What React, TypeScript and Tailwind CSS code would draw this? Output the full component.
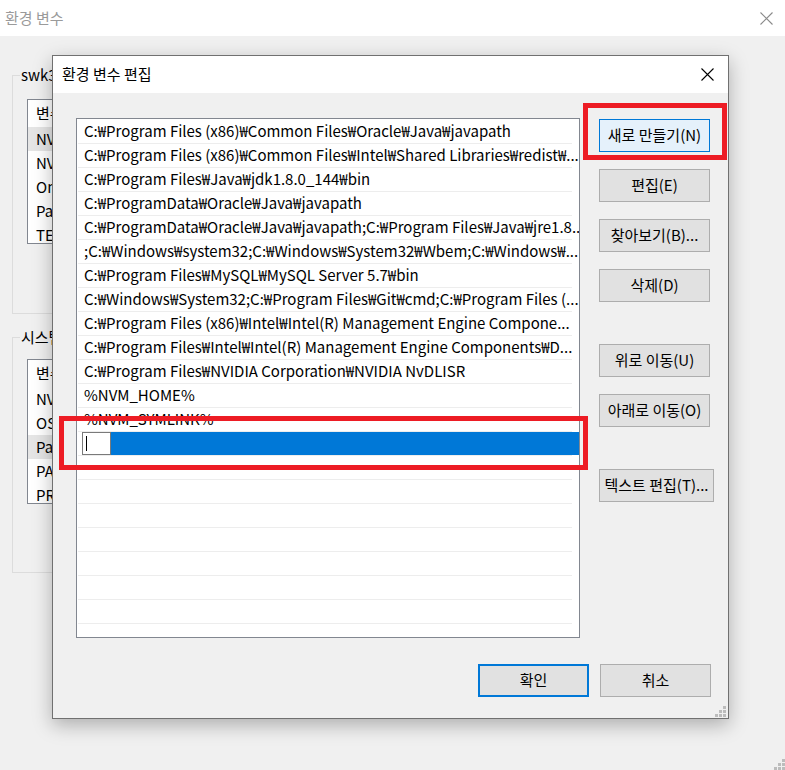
import React from 'react';

const pathRows = [
  'C:₩Program Files (x86)₩Common Files₩Oracle₩Java₩javapath',
  'C:₩Program Files (x86)₩Common Files₩Intel₩Shared Libraries₩redist₩...',
  'C:₩Program Files₩Java₩jdk1.8.0_144₩bin',
  'C:₩ProgramData₩Oracle₩Java₩javapath',
  'C:₩ProgramData₩Oracle₩Java₩javapath;C:₩Program Files₩Java₩jre1.8...',
  ';C:₩Windows₩system32;C:₩Windows₩System32₩Wbem;C:₩Windows₩...',
  'C:₩Program Files₩MySQL₩MySQL Server 5.7₩bin',
  'C:₩Windows₩System32;C:₩Program Files₩Git₩cmd;C:₩Program Files (...',
  'C:₩Program Files (x86)₩Intel₩Intel(R) Management Engine Compone...',
  'C:₩Program Files₩Intel₩Intel(R) Management Engine Components₩D...',
  'C:₩Program Files₩NVIDIA Corporation₩NVIDIA NvDLISR',
  '%NVM_HOME%',
  '%NVM_SYMLINK%',
];

const userVars = ['NVM_HOME', 'NVM_SYMLINK', 'OneDrive', 'Path', 'TEMP'];
const systemVars = ['NVM_HOME', 'OS', 'Path', 'PATHEXT', 'PROCESSOR_ARCHITECTURE'];

const CloseIcon = ({ className }: { className?: string }) => (
  <svg width="13" height="13" viewBox="0 0 13 13" className={className}>
    <path d="M0.5 0.5L12.5 12.5M12.5 0.5L0.5 12.5" stroke="currentColor" strokeWidth="1.1" />
  </svg>
);

const Grip = () => (
  <svg width="11" height="11" viewBox="0 0 11 11">
    <g fill="#bcbcbc">
      <rect x="8" y="0" width="3" height="3" />
      <rect x="4" y="4" width="3" height="3" />
      <rect x="8" y="4" width="3" height="3" />
      <rect x="0" y="8" width="3" height="3" />
      <rect x="4" y="8" width="3" height="3" />
      <rect x="8" y="8" width="3" height="3" />
    </g>
  </svg>
);

const VarList = ({ items, highlight }: { items: string[]; highlight: number }) => (
  <div className="h-[145px] border border-[#828790] bg-white overflow-hidden">
    <div className="h-[27px] flex items-center pl-[8px]">변수</div>
    {items.map((v, i) => (
      <div
        key={v}
        className={`h-[24px] flex items-center pl-[8px] whitespace-nowrap ${i === highlight ? 'bg-[#e5e5e5]' : ''}`}
      >
        {v}
      </div>
    ))}
  </div>
);

const SideButton = ({ label, className = '' }: { label: string; className?: string }) => (
  <button className={`h-[33px] w-[111px] border border-[#adadad] bg-[#e1e1e1] text-[15px] text-black ${className}`}>
    {label}
  </button>
);

export default function App() {
  return (
    <div className="relative w-[785px] h-[770px] overflow-hidden bg-[#f0f0f0] text-[15px] text-black font-['Noto_Sans_CJK_KR','Noto_Sans',sans-serif]">
      {/* background window */}
      <div className="h-[36px] bg-white flex items-center justify-between pl-[5px] pr-[12px] text-[#9a9a9a]">
        <span>환경 변수</span>
        <CloseIcon className="text-[#8a8a8a]" />
      </div>
      <div className="w-[700px] pl-[12px] pt-[39px]">
        <fieldset className="relative h-[239px] border border-[#dcdcdc] px-[14px] pt-[23px]">
          <span className="absolute left-[7px] top-[-12px] bg-[#f0f0f0] px-[1px] leading-[22px]">swk3</span>
          <VarList items={userVars} highlight={0} />
        </fieldset>
        <fieldset className="relative mt-[23px] h-[236px] border border-[#dcdcdc] px-[14px] pt-[21px]">
          <span className="absolute left-[7px] top-[-12px] bg-[#f0f0f0] px-[1px] leading-[22px]">시스템 변수</span>
          <VarList items={systemVars} highlight={2} />
        </fieldset>
      </div>
      <div className="absolute right-0 bottom-0">
        <Grip />
      </div>

      {/* edit dialog */}
      <div className="absolute left-[52px] top-[55px] w-[677px] h-[664px] border border-[#707070] bg-[#f0f0f0] shadow-[0_6px_18px_rgba(0,0,0,0.28)] flex flex-col">
        <div className="h-[37px] bg-white flex items-center justify-between pl-[9px] pr-[14px]">
          <span>환경 변수 편집</span>
          <CloseIcon className="text-black" />
        </div>
        <div className="flex-1 flex flex-col">
          <div className="flex pl-[23px] pt-[25px]">
            <div className="w-[504px] h-[520px] border border-[#828790] bg-white overflow-hidden pt-[1px]">
              {pathRows.map((p, i) => (
                <div key={i} className="h-[24px] flex flex-col">
                  <div className="flex-1 flex items-center pl-[7px] whitespace-nowrap overflow-hidden">{p}</div>
                  <div className="h-[1px] ml-[1px] mr-[7px] bg-[#ededed]" />
                </div>
              ))}
              <div className="h-[24px] flex flex-col">
                <div className="flex-1 flex items-stretch pl-[5px]">
                  <div className="w-[29px] border border-[#7a7a7a] bg-white flex items-center pl-[3px]">
                    <div className="w-[1px] h-[15px] bg-black" />
                  </div>
                  <div className="flex-1 bg-[#0078d7]" />
                </div>
                <div className="h-[1px] ml-[1px] mr-[7px] bg-[#ededed]" />
              </div>
              {Array.from({ length: 8 }).map((_, i) => (
                <div key={'e' + i} className="h-[24px] flex flex-col">
                  <div className="flex-1" />
                  <div className="h-[1px] ml-[1px] mr-[7px] bg-[#ededed]" />
                </div>
              ))}
            </div>
            <div className="ml-[19px] pt-[1px] flex flex-col items-start">
              <button className="h-[33px] w-[111px] border border-[#0078d7] bg-[#e5f1fb] text-[15px] text-black">
                새로 만들기(N)
              </button>
              <SideButton label="편집(E)" className="mt-[17px]" />
              <SideButton label="찾아보기(B)..." className="mt-[17px]" />
              <SideButton label="삭제(D)" className="mt-[17px]" />
              <SideButton label="위로 이동(U)" className="mt-[42px]" />
              <SideButton label="아래로 이동(O)" className="mt-[17px]" />
              <SideButton label="텍스트 편집(T)..." className="mt-[42px] w-[115px]" />
            </div>
          </div>
          <div className="flex justify-end gap-[11px] pr-[17px] mt-[26px]">
            <button className="h-[33px] w-[111px] border-2 border-[#0078d7] bg-[#e1e1e1] text-[15px] text-black">확인</button>
            <button className="h-[33px] w-[111px] border border-[#adadad] bg-[#e1e1e1] text-[15px] text-black">취소</button>
          </div>
          <div className="mt-auto self-end mr-[2px] mb-[1px]">
            <Grip />
          </div>
        </div>
      </div>

      {/* red annotation boxes */}
      <div className="absolute left-[583px] top-[103px] w-[144px] h-[57px] border-[5px] border-[#ed1c24]" />
      <div className="absolute left-[59px] top-[416px] w-[529px] h-[54px] border-[5px] border-[#ed1c24]" />
    </div>
  );
}
